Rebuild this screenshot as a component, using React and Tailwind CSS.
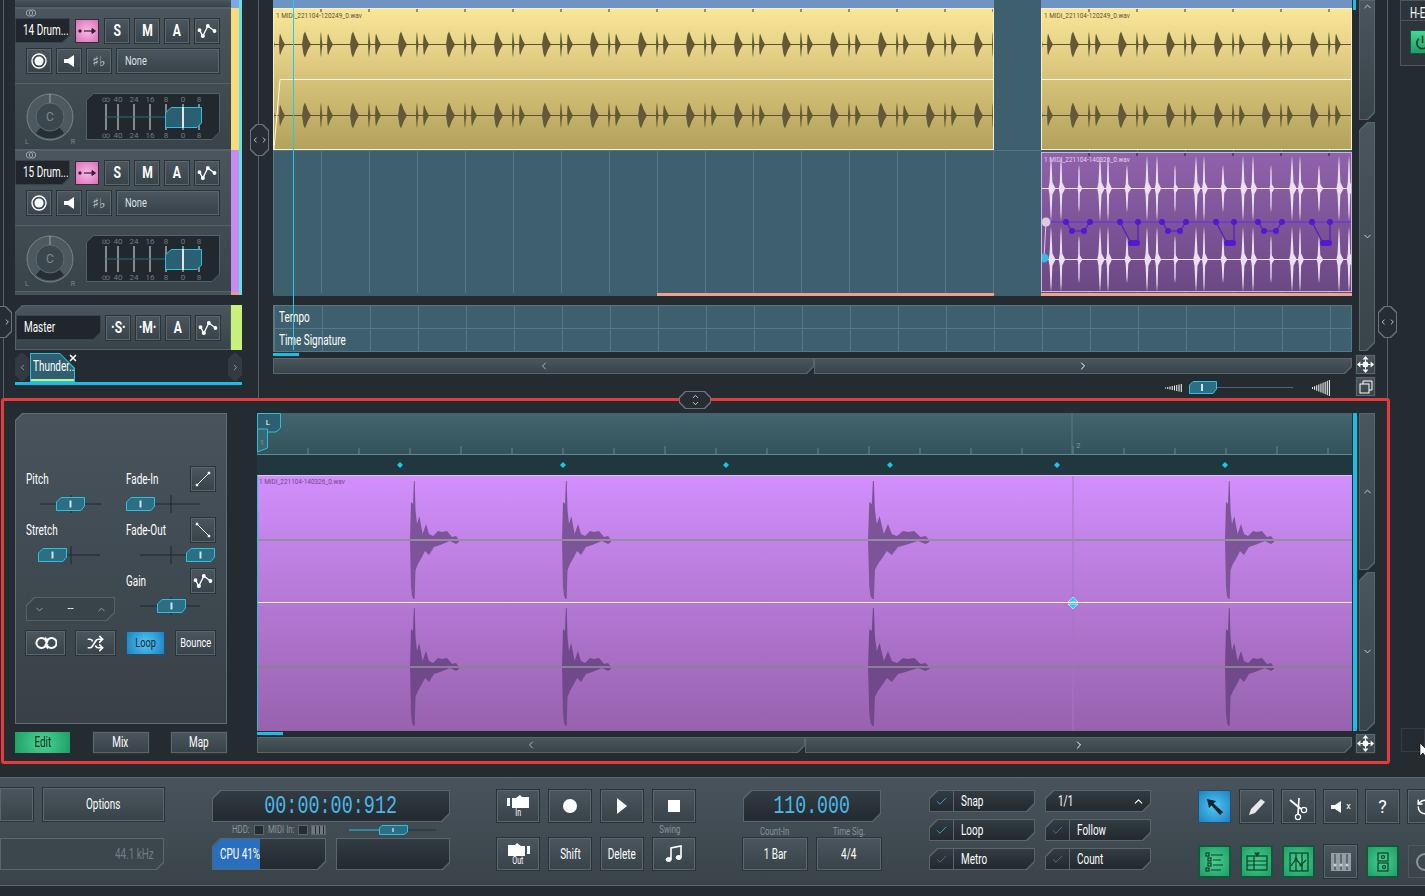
import React from "react";
import { Shuffle, ChevronLeft, ChevronRight, ChevronUp, ChevronDown, RotateCcw, Power, Check, X } from "lucide-react";

const cutBR = "[clip-path:polygon(0_0,100%_0,100%_calc(100%-7px),calc(100%-7px)_100%,0_100%)]";
const cutTL = "[clip-path:polygon(7px_0,100%_0,100%_100%,0_100%,0_7px)]";
const cutTLBR = "[clip-path:polygon(8px_0,100%_0,100%_calc(100%-8px),calc(100%-8px)_100%,0_100%,0_8px)]";
const cutAll = "[clip-path:polygon(6px_0,calc(100%-6px)_0,100%_6px,100%_calc(100%-6px),calc(100%-6px)_100%,6px_100%,0_calc(100%-6px),0_6px)]";
const raised = "bg-gradient-to-b from-[#4a555d] to-[#39434a]";
const well = "bg-gradient-to-b from-[#333c43] to-[#22292f]";

// condensed label, the app's own font is narrower than anything installed
function T({ children, className = "", left = false }) {
  return (
    <span className={`inline-block whitespace-nowrap scale-x-[0.71] ${left ? "origin-left" : "origin-center"} ${className}`}>
      {children}
    </span>
  );
}

function Btn({ children, className = "w-[24px] h-[24px]", tone = raised }) {
  return (
    <div className={`${className} ${tone} border border-[#5a656c] shadow-[0_0_0_1px_#2b3339] flex items-center justify-center text-white text-[13px]`}>
      {children}
    </div>
  );
}

function Cut({ clip = cutBR, className = "", line = "bg-[#5a656c]", fill = well, children, inner = "" }) {
  return (
    <div className={`${className} ${clip} ${line} p-px`}>
      <div className={`w-full h-full ${clip} ${fill} ${inner}`}>{children}</div>
    </div>
  );
}

function Curve({ size = 20 }) {
  return (
    <svg width={size} height={size} viewBox="0 0 24 24" fill="white" stroke="white" strokeWidth="1.6">
      <path d="M3 11 L7 18 L13 6 L21 12" fill="none" />
      <circle cx="3" cy="11" r="1.5" /><circle cx="7" cy="18" r="1.7" /><circle cx="13" cy="6" r="1.5" /><circle cx="21" cy="12" r="1.5" />
    </svg>
  );
}

function MoveIcon() {
  return (
    <svg width="17" height="17" viewBox="0 0 20 20" fill="white">
      <path d="M10 0 L13.5 4 H6.5 Z M10 20 L13.5 16 H6.5 Z M0 10 L4 6.5 V13.5 Z M20 10 L16 6.5 V13.5 Z" />
      <circle cx="10" cy="10" r="3.4" />
      <path d="M10 4 V16 M4 10 H16" stroke="white" strokeWidth="1.2" />
    </svg>
  );
}

function Handle({ className = "" }) {
  return (
    <Cut clip={cutAll} className={`absolute w-[19px] h-[32px] ${className}`} line="bg-[#69747b]" fill="bg-[#262d33]" inner="flex items-center justify-center">
      <ChevronLeft size={10} color="white" strokeWidth={2} />
      <ChevronRight size={10} color="white" strokeWidth={2} />
    </Cut>
  );
}

function Fader({ w = 89, x = 0, from = 0, to = 89 }) {
  return (
    <svg width={w} height="18" className="block">
      <line x1={from} x2={to} y1="9" y2="9" stroke="#20272c" />
      <line x1="45" x2="45" y1="0" y2="18" stroke="#20272c" />
      <path d={`M${x + 5} 2.5 H${x + 28.5} V11 L${x + 25} 15.5 H${x + 0.5} V7 Z`} fill="#2b6f84" stroke="#2fc0df" />
      <line x1={x + 14.5} x2={x + 14.5} y1="5.5" y2="12.5" stroke="#cfe4ea" strokeWidth="2" />
    </svg>
  );
}

function Meter() {
  const labels = [["∞", 20], ["40", 32], ["24", 48], ["16", 64], ["8", 80], ["0", 97], ["8", 113]];
  return (
    <svg width="134" height="47" className="block">
      <path d="M7.5 .5 H133.5 V39 L126 46.5 H.5 V7 Z" fill="#22292e" stroke="#555f66" />
      {labels.map(([t, x], i) => (
        <g key={i}>
          <text x={x} y="9" fontSize="8" fill="#6f797f" textAnchor="middle" fontFamily="Roboto">{t}</text>
          <text x={x} y="45" fontSize="8" fill="#6f797f" textAnchor="middle" fontFamily="Roboto">{t}</text>
          <line x1={x} x2={x} y1="11" y2="37" stroke="#e4e8ea" />
        </g>
      ))}
      <line x1="20" x2="80" y1="24" y2="24" stroke="#2f6d7a" />
      <path d="M85 14.5 H115.5 V30 L111 34.5 H79.5 V20 Z" fill="#2b5f72" stroke="#2fc0df" />
      <line x1="97" x2="97" y1="14" y2="35" stroke="#dfe7ea" strokeWidth="2" />
    </svg>
  );
}

function Knob() {
  return (
    <svg width="50" height="50" className="block">
      <circle cx="25" cy="25" r="23" fill="#4d585f" stroke="#7a848a" strokeWidth="1" />
      <path d="M11 41 A21 21 0 0 0 39 41 L33 34 A13 13 0 0 1 17 34 Z" fill="#262d33" />
      <circle cx="25" cy="25" r="14" fill="#3c464d" stroke="#5f6a71" />
      <line x1="25" x2="25" y1="2" y2="11" stroke="#9aa3a8" />
      <text x="25" y="29" fontSize="12" fill="#7d878d" textAnchor="middle" fontFamily="Roboto">C</text>
    </svg>
  );
}

function Track({ name, color }) {
  return (
    <div className="flex h-[142px]">
      <div className={`w-[216px] border-y border-[#566067] ${raised} flex flex-col`}>
        <div className="h-[9px] pl-[10px]">
          <svg width="12" height="8" viewBox="0 0 12 8" fill="none" stroke="#98a2a8"><circle cx="4.5" cy="4" r="3.2" /><circle cx="7.5" cy="4" r="3.2" /></svg>
        </div>
        <div className="flex h-[25px] items-center">
          <Cut className="w-[55px] h-[25px]" line="bg-[#39434a]" fill="bg-[#20262b]" inner="flex items-center pl-[7px]">
            <T left className="text-[14px] text-white">{name}</T>
          </Cut>
          <div className="ml-[5px] w-[24px] h-[24px] border border-[#3a2a36] bg-[radial-gradient(circle,#f8b8e4,#d970ba)] flex items-center justify-center">
            <svg width="18" height="8" viewBox="0 0 18 8" fill="#35202e" stroke="#35202e"><circle cx="2" cy="4" r="1.2" /><path d="M6 4 H16" strokeWidth="1.2" /><path d="M14 1.5 L17.5 4 L14 6.5 Z" /></svg>
          </div>
          <div className="flex ml-[6px] gap-[6px]">
            <Btn><T className="font-bold text-[17px]">S</T></Btn>
            <Btn><T className="font-bold text-[17px]">M</T></Btn>
            <Btn><T className="font-bold text-[17px]">A</T></Btn>
            <Btn><Curve /></Btn>
          </div>
        </div>
        <div className="flex h-[24px] mt-[6px] ml-[12px] gap-[6px]">
          <Btn>
            <svg width="18" height="18"><circle cx="9" cy="9" r="7" fill="none" stroke="white" strokeWidth="1.4" /><circle cx="9" cy="9" r="4.5" fill="white" /></svg>
          </Btn>
          <Btn>
            <svg width="14" height="14" viewBox="0 0 14 14" fill="white"><path d="M2 5 H6 L12 1 V13 L6 9 H2 Z" /></svg>
          </Btn>
          <Btn><span className="text-[14px] text-[#c0c8cc] font-['DejaVu_Sans']">♯♭</span></Btn>
          <Btn className="w-[102px] h-[24px]"><div className="w-full pl-[7px]"><T left className="text-[13px] text-[#dfe4e6]">None</T></div></Btn>
        </div>
        <div className="mt-[10px] flex-1 border-t border-[#566067] flex items-center">
          <div className="relative ml-[10px] w-[50px]">
            <Knob />
            <span className="absolute left-[0px] bottom-[-6px] text-[7px] text-[#7d878d]">L</span>
            <span className="absolute right-[0px] bottom-[-6px] text-[7px] text-[#7d878d]">R</span>
          </div>
          <div className="ml-[11px]"><Meter /></div>
        </div>
      </div>
      <div className={`w-[8px] ${color}`} />
      <div className="w-[3px] bg-[#62e0e6]" />
    </div>
  );
}

function yellowPath(width, c, a) {
  let d = "";
  for (let x = 0; x < width + 48; x += 48) {
    const parts = [[x - 1, 1, 1.5, a], [x + 6, 1, 5, a * 0.85], [x + 31, 3, 6, a]];
    parts.forEach(([p, l, r, h]) => {
      d += `M${p - l} ${c} L${p - l / 2} ${c - h * 0.75} L${p} ${c - h} L${p + r / 2} ${c - h * 0.4} L${p + r} ${c} L${p + r / 2} ${c + h * 0.4} L${p} ${c + h} L${p - l / 2} ${c + h * 0.75} Z`;
    });
  }
  return d;
}

function ClipTicks({ width, color }) {
  const xs = Array.from({ length: Math.ceil(width / 48) }, (_, i) => i * 48 + 47);
  return xs.map((x) => <line key={x} x1={x} x2={x} y1="0" y2="3" stroke={color} />);
}

function YellowClip({ width, fade }) {
  return (
    <div className="relative h-[142px] bg-gradient-to-b from-[#fbe698] to-[#b3a25c] border border-[#f6f0d0]" style={{ width }}>
      <svg width={width - 2} height="140" className="block">
        <line x1="0" x2={width} y1="35.5" y2="35.5" stroke="#5e5338" />
        <line x1="0" x2={width} y1="106.5" y2="106.5" stroke="#5e5338" />
        <path d={yellowPath(width, 35.5, 13)} fill="#635838" />
        <path d={yellowPath(width, 106.5, 13)} fill="#635838" />
        <ClipTicks width={width} color="#3a3322" />
        <path d={fade ? `M0 140 L6 70.5 H${width}` : `M0 70.5 H${width}`} fill="none" stroke="#fffbe6" />
      </svg>
      <span className="absolute left-[2px] top-[1px] text-[8px] text-[#5e5338] whitespace-nowrap scale-x-[0.8] origin-left">1 MIDI_221104-120249_0.wav</span>
    </div>
  );
}

function spikes(c) {
  const off = [[9, 33, 2.6], [19, 33, 2.2], [37, 24, 1.5], [58, 33, 2.8], [66, 33, 2], [85, 24, 2.4]];
  let d = "";
  for (let k = 0; k < 4; k++) {
    off.forEach(([o, a, w]) => {
      const x = o + k * 96;
      const m = a * 0.18;
      const n = w * 0.55;
      const t = a * 0.75;
      d += `M${x - w} ${c} L${x - n} ${c - m} L${x - 0.6} ${c - t} L${x} ${c - a} L${x + 0.6} ${c - t} L${x + n} ${c - m} L${x + w + 2} ${c} L${x + n} ${c + m} L${x + 0.6} ${c + t} L${x} ${c + a} L${x - 0.6} ${c + t} L${x - n} ${c + m} Z`;
    });
  }
  return d;
}

function PurpleClip() {
  const nodes = [];
  const lines = [];
  for (let k = 0; k < 3; k++) {
    const o = k * 96;
    [[24, 69], [30, 78], [42, 78], [48, 69]].forEach((p) => nodes.push([p[0] + o, p[1]]));
    lines.push(`M${24 + o} 69 L${30 + o} 78 H${42 + o} L${48 + o} 69`);
    [[78, 69], [89, 90], [92, 90], [95, 90], [96, 69]].forEach((p) => nodes.push([p[0] + o, p[1]]));
    lines.push(`M${78 + o} 69 L${89 + o} 90 H${96 + o} V69`);
  }
  return (
    <div className="relative w-[311px] h-[140px] mt-[2px] bg-gradient-to-b from-[#9062aa] to-[#6c4885] border border-[#cdb6dd]">
      <svg width="309" height="138" className="block overflow-hidden">
        <line x1="0" x2="309" y1="35.5" y2="35.5" stroke="#efe6f4" strokeWidth="1.2" />
        <line x1="0" x2="309" y1="106.5" y2="106.5" stroke="#efe6f4" strokeWidth="1.2" />
        <path d={spikes(35.5)} fill="#ebdff0" />
        <path d={spikes(106.5)} fill="#ebdff0" />
        <ClipTicks width={311} color="#2d1c3a" />
        <line x1="0" x2="309" y1="69" y2="69" stroke="#6a3ad8" strokeWidth="1.4" />
        {lines.map((d, i) => <path key={i} d={d} fill="none" stroke="#5318d0" strokeWidth="1.2" />)}
        {nodes.map(([x, y], i) => <circle key={i} cx={x} cy={y} r="3" fill="#5318d0" />)}
        <line x1="4" x2="2" y1="69" y2="105" stroke="#d9cce2" />
        <circle cx="4" cy="69" r="4.5" fill="#d9cce2" />
        <circle cx="2" cy="105" r="4.5" fill="#37bce6" />
      </svg>
      <span className="absolute left-[2px] top-[1px] text-[8px] text-[#e4d4ee] whitespace-nowrap scale-x-[0.8] origin-left">1 MIDI_221104-140326_0.wav</span>
    </div>
  );
}

function Scroll({ className = "", parts }) {
  return (
    <div className={`flex ${className}`}>
      <Cut clip={cutBR} className="h-full" line="bg-[#59646b]" fill={raised}>
        <div className="flex items-center justify-center h-full" style={{ width: parts[0] }}><ChevronLeft size={12} color="#aab3b8" /></div>
      </Cut>
      <Cut clip={cutBR} className="h-full" line="bg-[#59646b]" fill={raised}>
        <div className="flex items-center justify-center h-full" style={{ width: parts[1] }}><ChevronRight size={12} color="white" /></div>
      </Cut>
    </div>
  );
}

function VScroll({ className = "", up, topArrow = false }) {
  return (
    <div className={`flex flex-col gap-[2px] ${className}`}>
      <Cut clip={cutBR} className="w-[16px]" line="bg-[#59646b]" fill={raised}>
        <div className={`w-full flex justify-center ${topArrow ? "items-start" : "items-center"}`} style={{ height: up }}>
          <ChevronUp size={11} color="#cfd6da" />
        </div>
      </Cut>
      <Cut clip={cutTLBR} className="w-[16px] flex-1" line="bg-[#59646b]" fill={raised} inner="flex items-center justify-center">
        <ChevronDown size={11} color="#cfd6da" />
      </Cut>
    </div>
  );
}

function Bars({ n, max, w }) {
  const step = w / n;
  return (
    <svg width={w} height={max} className="block">
      {Array.from({ length: n }).map((_, i) => {
        const h = Math.max(1, (max * (i + 1)) / n);
        return <line key={i} x1={i * step + 0.5} x2={i * step + 0.5} y1={(max - h) / 2} y2={(max + h) / 2} stroke="white" />;
      })}
    </svg>
  );
}

function TopSection() {
  return (
    <div className="relative flex h-[398px]">
      <div className="ml-[3px] w-[12px] shrink-0 border-l border-[#566067]" />
      {/* track list */}
      <div className="w-[228px] shrink-0 flex flex-col">
        <div className="flex h-[8px]">
          <div className={`w-[216px] ${raised} border-b border-[#566067]`} />
          <div className="w-[8px] bg-[#7ea8e0]" />
          <div className="w-[3px] bg-[#62e0e6]" />
        </div>
        <Track name="14 Drum..." color="bg-[#f8dc7c]" />
        <Track name="15 Drum..." color="bg-[#c88cf0]" />
        <div className="flex h-[3px]">
          <div className="w-[216px] bg-[#465159]" />
          <div className="w-[8px] bg-[#e89a8c]" />
          <div className="w-[3px] bg-[#62e0e6]" />
        </div>
        <div className="flex h-[45px] mt-[10px]">
          <Cut clip={cutTL} className="w-[216px] h-full" line="bg-[#566067]" fill={raised} inner="flex items-center">
            <Cut className="w-[85px] h-[25px]" line="bg-[#39434a]" fill="bg-[#20262b]" inner="flex items-center pl-[7px]">
              <T left className="text-[14px] text-white">Master</T>
            </Cut>
            <div className="flex ml-[5px] gap-[6px]">
              <Btn><T className="font-bold text-[17px]">·S·</T></Btn>
              <Btn><T className="font-bold text-[17px]">·M·</T></Btn>
              <Btn><T className="font-bold text-[17px]">A</T></Btn>
              <Btn><Curve /></Btn>
            </div>
          </Cut>
          <div className="w-[11px] bg-[#c8f07c]" />
        </div>
        <div className="flex h-[32px] mt-[3px] w-[227px] border-b-[3px] border-[#17bfe6]">
          <Cut clip={cutAll} className="w-[14px] h-[28px]" line="bg-[#333c43]" fill="bg-[#323b42]" inner="flex items-center justify-center">
            <ChevronLeft size={9} color="#aab3b8" />
          </Cut>
          <div className="relative ml-[1px] w-[45px] h-[29px] [clip-path:polygon(0_0,30px_0,100%_15px,100%_100%,0_100%)] bg-[#29c0e0] p-px">
            <div className="w-full h-full [clip-path:polygon(0_0,29px_0,100%_15px,100%_100%,0_100%)] bg-[#2f5f70] border-b-2 border-[#c8f07c] flex items-center pl-[2px]">
              <T left className="text-[14px] text-white">Thunder...</T>
            </div>
          </div>
          <div className="flex-1" />
          <Cut clip={cutAll} className="w-[14px] h-[28px]" line="bg-[#333c43]" fill="bg-[#323b42]" inner="flex items-center justify-center">
            <ChevronRight size={9} color="#aab3b8" />
          </Cut>
        </div>
      </div>
      <div className="w-[16px] shrink-0 border-r border-[#566067]" />
      <div className="w-[14px] shrink-0" />
      {/* arrangement */}
      <div className="w-[1079px] shrink-0 flex flex-col">
        <div className="flex h-[8px] bg-[#3e5f6d]">
          <div className="w-[721px] bg-[#6f94c4]" />
          <div className="w-[47px]" />
          <div className="w-[311px] bg-[#6f94c4]" />
        </div>
        <div className="h-[285px] bg-[#3e5f6d] bg-[repeating-linear-gradient(90deg,#587a88_0,#587a88_1px,transparent_1px,transparent_48px)]">
          <div className="flex h-[142px]">
            <YellowClip width={721} fade />
            <div className="w-[47px]" />
            <YellowClip width={311} />
          </div>
          <div className="flex h-[143px]">
            <div className="w-[768px] border-t border-[#55747f]" />
            <PurpleClip />
          </div>
        </div>
        <div className="flex h-[3px] bg-[#3e5f6d]">
          <div className="w-[384px]" />
          <div className="w-[337px] bg-[#f0a090]" />
          <div className="w-[47px]" />
          <div className="w-[311px] bg-[#f0a090]" />
        </div>
        <div className="mt-[9px] h-[47px] border border-[#5a7683] bg-[#3e5f6d] bg-[repeating-linear-gradient(90deg,#587a88_0,#587a88_1px,transparent_1px,transparent_48px)] flex flex-col">
          <div className="h-[23px] border-b border-[#587a88] flex items-center pl-[5px]"><T left className="text-[14px] text-white">Tempo</T></div>
          <div className="flex-1 flex items-center pl-[5px]"><T left className="text-[14px] text-white">Time Signature</T></div>
        </div>
        <div className="mt-[1px] w-[26px] h-[3px] bg-[#17bfe6]" />
        <Scroll className="mt-[2px] h-[16px]" parts={[539, 536]} />
        <div className="mt-[6px] flex items-center justify-end pr-[21px] h-[15px]">
          <Bars n={8} max={8} w={18} />
          <div className="ml-[6px]"><svg width="104" height="15" className="block"><line x1="0" x2="104" y1="7.5" y2="7.5" stroke="#59646b" /><path d="M4 1.5 H27.5 V9 L24 13.5 H.5 V5 Z" fill="#2b6f84" stroke="#2fc0df" /><line x1="13" x2="13" y1="4" y2="11" stroke="#cfe4ea" strokeWidth="2" /></svg></div>
          <div className="ml-[19px]"><Bars n={9} max={16} w={19} /></div>
        </div>
      </div>
      <div className="w-[2px] shrink-0" />
      {/* right scroll */}
      <div className="w-[5px] shrink-0 flex flex-col"><div className="h-[10px] w-[3px] -ml-[1px] bg-[#17bfe6]" /></div>
      <div className="w-[20px] shrink-0 flex flex-col">
        <VScroll className="h-[351px]" up={118} topArrow />
        <div className="mt-[4px] -ml-[3px]"><Btn className="w-[19px] h-[19px]"><MoveIcon /></Btn></div>
        <div className="mt-[3px] -ml-[3px]">
          <Btn className="w-[19px] h-[19px]">
            <svg width="14" height="14" fill="none" stroke="white"><rect x="1" y="4" width="9" height="9" /><path d="M4 4 V1 H13 V10 H10" /></svg>
          </Btn>
        </div>
      </div>
      <div className="w-[9px] shrink-0 border-r border-[#566067]" />
      <div className="ml-[12px] flex-1 min-w-0 overflow-hidden">
        <div className="h-[66px] w-[60px] border border-[#4d575e] bg-[#2d353b]">
          <div className="h-[20px] border-b border-[#4d575e] pl-[9px]"><T left className="text-[14px] text-white">H-E</T></div>
          <div className="mt-[9px] ml-[9px] w-[24px] h-[24px] bg-gradient-to-b from-[#46d892] to-[#1f9e66] border border-[#17563d] flex items-center justify-center">
            <Power size={15} color="#123d2b" strokeWidth={2.4} />
          </div>
        </div>
      </div>
      <Handle className="left-[250px] top-[124px]" />
      <Handle className="left-[-7px] top-[306px]" />
      <Handle className="left-[1378px] top-[306px]" />
      <div className="absolute left-[293px] top-0 w-px h-[350px] bg-[#19cdf0]" />
      <div className="absolute left-[68px] top-[353px] text-white"><X size={10} strokeWidth={4} /></div>
    </div>
  );
}

const upper = [[0, 0], [1, 38], [3, 36], [3.9, 59], [4.7, 59], [5.5, 30], [7, 16], [9.3, 24], [12.6, 6], [16, 16], [19, 6], [23, 4], [28, 9], [32, 8], [37, 9], [42, 3], [46, 4], [49, 0]];
const lower = [[49, 2], [46, 4], [40, 1], [30, 5], [24, 7], [19, 15], [15, 11], [12, 17], [8, 24], [5.5, 30], [4.7, 59], [3.5, 59], [2, 56], [1, 47], [0, 0]];

function hitPath(x0, c, stretch) {
  const up = upper.map(([x, a]) => `${(x0 + x * stretch).toFixed(1)} ${c - a}`).join(" L");
  const dn = lower.map(([x, a]) => `${(x0 + x * stretch).toFixed(1)} ${c + a}`).join(" L");
  return `M${up} L${dn} Z`;
}

function Timeline() {
  const hits = [[152, 1], [304, 1], [610, 1.25], [967, 1]];
  const ticks = Array.from({ length: 22 }, (_, i) => 0 + 51 * i);
  const marks = [143, 306, 469, 633, 800, 968];
  return (
    <div className="w-[1095px] flex flex-col">
      <div className="relative h-[42px] bg-gradient-to-b from-[#44656f] to-[#32525c] border-b border-[#6b8690]">
        <svg width="1095" height="41" className="block">
          {ticks.map((x, i) => <line key={i} x1={x} x2={x} y1={i % 4 === 0 ? 33 : 35} y2="41" stroke="#6b8690" />)}
          <line x1="815" x2="815" y1="0" y2="41" stroke="#5d7a85" />
          <text x="819" y="35" fontSize="8" fill="#7b949e" fontFamily="Roboto">2</text>
          <path d="M.5 .5 H23.5 V15 L19 19 H.5 Z" fill="#2d5f70" stroke="#29c0e0" />
          <text x="11" y="12" fontSize="8" fill="white" textAnchor="middle" fontFamily="Roboto">L</text>
          <path d="M.5 16 H10.5 V35 L.5 39 Z" fill="#3b6674" stroke="#29c0e0" />
          <text x="5" y="32" fontSize="8" fill="#7b949e" textAnchor="middle" fontFamily="Roboto">1</text>
        </svg>
      </div>
      <div className="h-[20px] bg-[#213740]">
        <svg width="1095" height="20" className="block">
          {marks.map((x) => <path key={x} d={`M${x} 7 L${x + 3} 10 L${x} 13 L${x - 3} 10 Z`} fill="#17c8ee" />)}
        </svg>
      </div>
      <div className="relative h-[256px] bg-gradient-to-b from-[#d18ffc] to-[#9862ae] border-l border-[#29c0e0] border-t border-t-[#e0c4f4]">
        <svg width="1094" height="255" className="block">
          <line x1="815" x2="815" y1="0" y2="255" stroke="#a574c4" />
          {hits.map(([x, s]) => (
            <g key={x}>
              <path d={hitPath(x, 64, s)} fill="#7c5498" />
              <path d={hitPath(x, 191, s)} fill="#70498a" />
            </g>
          ))}
          <line x1="0" x2="1094" y1="64" y2="64" stroke="#968ba0" strokeWidth="2" />
          <line x1="0" x2="1094" y1="191" y2="191" stroke="#8b7f95" strokeWidth="2" />
          <line x1="0" x2="1094" y1="126.5" y2="126.5" stroke="#f6eefb" strokeWidth="1.2" />
          <path d="M815 121 L820 126 H810 Z M815 133 L820 128 H810 Z" fill="#29cdf0" stroke="#e6fbff" strokeWidth=".6" />
        </svg>
        <span className="absolute left-[1px] top-[0px] text-[8px] text-[#6f4a88] whitespace-nowrap scale-x-[0.8] origin-left">1 MIDI_221104-140326_0.wav</span>
      </div>
      <div className="mt-[1px] w-[26px] h-[3px] bg-[#17bfe6]" />
      <Scroll className="mt-[2px] h-[16px]" parts={[546, 545]} />
    </div>
  );
}

function EditPanel() {
  return (
    <div className="w-[212px] flex flex-col">
      <Cut clip={cutTL} className="h-[311px] w-full" line="bg-[#606b72]" fill="bg-gradient-to-b from-[#48535b] to-[#384148]" inner="pl-[10px] pt-[53px]">
        <div className="grid grid-cols-[89px_89px] gap-x-[11px] auto-rows-[51px]">
          <div>
            <div className="h-[24px] flex items-center"><T left className="text-[14px] text-white">Pitch</T></div>
            <div className="mt-[4px]"><Fader x={30} from={14} to={75} /></div>
          </div>
          <div>
            <div className="h-[24px] flex items-center justify-between">
              <T left className="text-[14px] text-white">Fade-In</T>
              <Btn><svg width="18" height="18" fill="white" stroke="white"><path d="M3 15 L15 3" /><circle cx="3" cy="15" r="1" /><circle cx="15" cy="3" r="1" /></svg></Btn>
            </div>
            <div className="mt-[4px]"><Fader x={0} from={0} to={74} /></div>
          </div>
          <div>
            <div className="h-[24px] flex items-center"><T left className="text-[14px] text-white">Stretch</T></div>
            <div className="mt-[4px]"><Fader x={12} from={12} to={74} /></div>
          </div>
          <div>
            <div className="h-[24px] flex items-center justify-between">
              <T left className="text-[14px] text-white">Fade-Out</T>
              <Btn><svg width="18" height="18" fill="white" stroke="white"><path d="M3 3 L15 15" /><circle cx="3" cy="3" r="1" /><circle cx="15" cy="15" r="1" /></svg></Btn>
            </div>
            <div className="mt-[4px]"><Fader x={60} from={14} to={70} /></div>
          </div>
          <div className="pt-[28px]">
            <Cut clip={cutTLBR} className="w-[89px] h-[24px]" line="bg-[#566067]" fill="bg-[#39434a]" inner="flex items-center justify-between px-[7px] text-[#9aa3a8]">
              <ChevronDown size={11} />
              <span className="text-[11px] text-white">--</span>
              <ChevronUp size={11} />
            </Cut>
          </div>
          <div>
            <div className="h-[24px] flex items-center justify-between">
              <T left className="text-[14px] text-white">Gain</T>
              <Btn><Curve /></Btn>
            </div>
            <div className="mt-[4px]"><Fader x={31} from={14} to={74} /></div>
          </div>
        </div>
        <div className="flex gap-[11px] mt-[11px]">
          <Btn className="w-[39px] h-[24px]">
            <svg width="22" height="14" viewBox="0 0 22 14" fill="none" stroke="white" strokeWidth="2"><path d="M10 3.5 A5 5 0 1 0 10 10.5 L13 3.5 A5 5 0 1 1 13 10.5" /><path d="M10 1 L13 3.5 L10 6 Z M13 8 L10 10.5 L13 13 Z" fill="white" strokeWidth=".5" /></svg>
          </Btn>
          <Btn className="w-[39px] h-[24px]"><Shuffle size={17} strokeWidth={2.4} /></Btn>
          <div className="w-[39px] h-[24px] bg-[radial-gradient(circle,#52c8f4,#1d80c0)] border border-[#2a4d66] flex items-center justify-center"><T className="text-[13px] text-[#10242e]">Loop</T></div>
          <Btn className="w-[39px] h-[24px]"><T className="text-[13px]">Bounce</T></Btn>
        </div>
      </Cut>
      <div className="mt-[8px] flex justify-between">
        <div className="w-[55px] h-[21px] bg-[radial-gradient(circle,#49d496,#1f9e66)] flex items-center justify-center"><T className="text-[14px] text-[#0c2e20]">Edit</T></div>
        <Btn className="w-[56px] h-[21px]"><T className="text-[14px]">Mix</T></Btn>
        <Btn className="w-[56px] h-[21px]"><T className="text-[14px]">Map</T></Btn>
      </div>
    </div>
  );
}

function Editor() {
  return (
    <div className="flex h-[366px]">
      <div className="relative ml-[1px] w-[1389px] shrink-0 h-[366px] border-[3px] border-[#e53b3c] rounded-[3px] flex pl-[11px] pt-[12px]">
        <EditPanel />
        <div className="w-[30px]" />
        <Timeline />
        <div className="w-[1px]" />
        <div className="w-[4px] h-[318px] bg-[#17bfe6]" />
        <div className="ml-[2px] w-[16px] flex flex-col">
          <VScroll className="h-[318px]" up={155} />
          <div className="mt-[3px] -ml-[3px]"><Btn className="w-[19px] h-[19px]"><MoveIcon /></Btn></div>
        </div>
        <Cut clip={cutAll} className="absolute left-[675px] top-[-10px] w-[32px] h-[18px]" line="bg-[#69747b]" fill="bg-[#262d33]" inner="flex flex-col items-center justify-center">
          <ChevronUp size={9} color="white" className="-mb-[2px]" />
          <ChevronDown size={9} color="white" />
        </Cut>
      </div>
      <div className="ml-[11px] flex-1 min-w-0 pt-[330px]">
        <div className="w-full h-[24px] border border-[#333c43]" />
      </div>
    </div>
  );
}

function Chk({ on, label }) {
  return (
    <Cut clip={cutTLBR} className="w-[106px] h-[22px]" line="bg-[#59646b]" inner="flex items-center">
      <div className="w-[24px] h-full border-r border-[#59646b] flex items-center justify-center">
        <Check size={13} color={on ? "#29c6e6" : "#6b757b"} strokeWidth={1.5} />
      </div>
      <div className="pl-[7px]"><T left className="text-[14px] text-white">{label}</T></div>
    </Cut>
  );
}

function Clapper({ out }) {
  return (
    <svg width="23" height="14" viewBox="0 0 23 14" fill="white" className={out ? "-scale-x-100" : ""}>
      <rect x="0" y="4" width="3" height="8" />
      <path d="M5 4 L9 4 L13 1 L15 3 H22 V14 H5 Z" />
    </svg>
  );
}

function ScissorsIcon() {
  return (
    <svg width="31" height="31" viewBox="0 0 31 31" fill="none" stroke="white">
      <path d="M7 9 L18 18" strokeWidth="2" />
      <path d="M16 7 L15 23" strokeWidth="1.6" />
      <circle cx="21" cy="19" r="2.6" strokeWidth="1.2" />
      <circle cx="15" cy="26" r="2.6" strokeWidth="1.2" />
    </svg>
  );
}

function Transport() {
  const greens = "bg-[radial-gradient(circle,#45d08e,#1f9e66)] border-2 border-[#17563d]";
  const toolBox = "w-[33px] h-[33px]";
  return (
    <div className="mt-[13px] h-[109px] border-y border-[#5d686f] bg-gradient-to-b from-[#48535b] to-[#3a434a] flex overflow-hidden">
      <div className="w-[164px] shrink-0 pt-[10px]">
        <div className="flex gap-[10px] h-[33px]">
          <Btn className="w-[33px] h-[33px]"><span /></Btn>
          <Btn className="w-[121px] h-[33px]"><T className="text-[14px]">Options</T></Btn>
        </div>
        <Cut className="mt-[17px] w-[164px] h-[32px]" fill="bg-[#3c464d]" inner="flex items-center justify-end pr-[9px]">
          <T className="text-[14px] text-[#737d83] origin-right">44.1 kHz</T>
        </Cut>
      </div>
      <div className="ml-[48px] w-[238px] shrink-0 pt-[12px]">
        <Cut clip={cutTLBR} className="h-[32px]" inner="flex items-center justify-center">
          <span className="font-['Liberation_Mono'] text-[26px] text-[#4bb8e8] scale-x-[0.71] inline-block whitespace-nowrap">00:00:00:912</span>
        </Cut>
        <div className="h-[16px] flex items-center">
          <div className="ml-[20px] w-[110px] flex items-center text-[#8a949a]">
            <T left className="text-[11px] w-[22px]">HDD:</T>
            <div className="w-[10px] h-[10px] border border-[#5a656c] bg-[#252c32]" />
            <T left className="ml-[4px] text-[11px] w-[30px]">MIDI In:</T>
            <div className="w-[10px] h-[10px] border border-[#5a656c] bg-[#252c32]" />
            <div className="ml-[3px] w-[15px] h-[10px] border border-[#5a656c] bg-[repeating-linear-gradient(90deg,#6f797f_0,#6f797f_3px,#252c32_3px,#252c32_4px)]" />
          </div>
          <div className="ml-[7px]">
            <svg width="87" height="12" className="block"><line x1="0" x2="30" y1="6" y2="6" stroke="#2fc0df" /><line x1="30" x2="87" y1="6" y2="6" stroke="#2b3339" /><path d="M33 1.5 H58.5 V8 L55 10.5 H30.5 V4 Z" fill="#2b6f84" stroke="#2fc0df" /><line x1="44" x2="44" y1="4" y2="8" stroke="white" /></svg>
          </div>
        </div>
        <div className="flex gap-[10px]">
          <Cut clip={cutTLBR} className="w-[114px] h-[32px]" inner="relative">
            <div className="w-[47px] h-full bg-[#2a6ebe] flex items-center pl-[7px]">
              <T left className="text-[14px] text-white">CPU 41%</T>
            </div>
          </Cut>
          <Cut className="w-[114px] h-[32px]" />
        </div>
      </div>
      <div className="ml-[47px] shrink-0 pt-[12px]">
        <div className="flex gap-[10px]">
          <Btn className="w-[42px] h-[32px]">
            <div className="flex flex-col items-center"><Clapper /><T className="text-[10px] leading-[10px]">In</T></div>
          </Btn>
          <Btn className="w-[42px] h-[32px]"><div className="w-[14px] h-[14px] rounded-full bg-white" /></Btn>
          <Btn className="w-[42px] h-[32px]"><svg width="12" height="16" fill="white"><path d="M1 0 L11 8 L1 16 Z" /></svg></Btn>
          <Btn className="w-[42px] h-[32px]"><div className="w-[12px] h-[12px] bg-white" /></Btn>
        </div>
        <div className="h-[16px] flex justify-end pr-[10px] items-center"><T className="text-[11px] text-[#8a949a]">Swing</T></div>
        <div className="flex gap-[10px]">
          <Btn className="w-[42px] h-[32px]">
            <div className="flex flex-col items-center"><Clapper out /><T className="text-[10px] leading-[10px]">Out</T></div>
          </Btn>
          <Btn className="w-[42px] h-[32px]"><T className="text-[14px]">Shift</T></Btn>
          <Btn className="w-[42px] h-[32px]"><T className="text-[14px]">Delete</T></Btn>
          <Btn className="w-[42px] h-[32px]">
            <svg width="18" height="18" viewBox="0 0 18 18" fill="white" stroke="white"><path d="M6 14 V3 L16 1 V12" fill="none" strokeWidth="1.6" /><ellipse cx="3.7" cy="14.5" rx="2.6" ry="2" /><ellipse cx="13.7" cy="12.5" rx="2.6" ry="2" /></svg>
          </Btn>
        </div>
      </div>
      <div className="ml-[48px] w-[138px] shrink-0 pt-[12px]">
        <Cut clip={cutTLBR} className="h-[32px]" inner="flex items-center justify-center">
          <span className="font-['Liberation_Mono'] text-[26px] text-[#4bb8e8] scale-x-[0.7] inline-block whitespace-nowrap">110.000</span>
        </Cut>
        <div className="h-[16px] flex items-center text-[#8a949a]">
          <div className="w-[64px] text-center"><T className="text-[11px]">Count-In</T></div>
          <div className="ml-[10px] w-[64px] text-center"><T className="text-[11px]">Time Sig.</T></div>
        </div>
        <div className="flex gap-[10px]">
          <Btn className="w-[64px] h-[32px]"><T className="text-[14px]">1 Bar</T></Btn>
          <Btn className="w-[64px] h-[32px]"><T className="text-[14px]">4/4</T></Btn>
        </div>
      </div>
      <div className="ml-[48px] w-[106px] shrink-0 pt-[12px] flex flex-col gap-[7px]">
        <Chk on label="Snap" />
        <Chk on label="Loop" />
        <Chk label="Metro" />
      </div>
      <div className="ml-[10px] w-[106px] shrink-0 pt-[12px] flex flex-col gap-[7px]">
        <Cut clip={cutTLBR} className="w-[106px] h-[22px]" line="bg-[#59646b]" inner="flex items-center justify-between pl-[12px] pr-[5px]">
          <T left className="text-[14px] text-white">1/1</T>
          <ChevronUp size={13} color="white" />
        </Cut>
        <Chk label="Follow" />
        <Chk label="Count" />
      </div>
      <div className="ml-[47px] shrink-0 pt-[12px] grid grid-cols-[33px_33px_33px_33px_33px_33px] gap-x-[9px] gap-y-[15px]">
        <div className={`${toolBox} bg-[radial-gradient(circle,#52c8f4,#1d80c0)] border border-[#2a4d66] flex items-center justify-center`}>
          <svg width="18" height="18" viewBox="0 0 18 18" fill="#10242e"><path d="M1 1 L10 3 L7.5 5.5 L17 14 L14 17 L5.5 7.5 L3 10 Z" /></svg>
        </div>
        <Btn className={toolBox}>
          <svg width="18" height="18" viewBox="0 0 18 18" fill="#e6e9eb"><path d="M1 17 L3 11 L13 1 L17 4 L7 15 Z" /></svg>
        </Btn>
        <Btn className={toolBox}><ScissorsIcon /></Btn>
        <Btn className={toolBox}>
          <div className="flex items-center gap-[2px]">
            <svg width="14" height="14" viewBox="0 0 14 14" fill="white"><path d="M1 5 H5 L11 1 V13 L5 9 H1 Z" /></svg>
            <span className="text-[9px]">x</span>
          </div>
        </Btn>
        <Btn className={toolBox}><span className="text-[18px]">?</span></Btn>
        <Btn className={toolBox}><RotateCcw size={18} /></Btn>
        <div className={`${toolBox} ${greens} flex items-center justify-center`}>
          <svg width="20" height="20" fill="none" stroke="#123d2b" strokeWidth="1.2"><rect x="1" y="1" width="3" height="3" /><rect x="3" y="6" width="3" height="3" /><rect x="3" y="11" width="3" height="3" /><rect x="1" y="16" width="3" height="3" /><path d="M6 3 H18 M8 8 H16 M8 13 H18 M6 18 H16" /></svg>
        </div>
        <div className={`${toolBox} ${greens} flex items-center justify-center`}>
          <svg width="22" height="20" fill="none" stroke="#123d2b" strokeWidth="1.2"><path d="M9 1 H13 L11 4 Z" fill="#123d2b" /><rect x="1" y="4" width="20" height="14" /><path d="M1 9 H21 M1 13 H21 M8 4 V18" /></svg>
        </div>
        <div className={`${toolBox} ${greens} flex items-center justify-center`}>
          <svg width="20" height="20" fill="#123d2b" stroke="#123d2b" strokeWidth="1.2"><rect x="1" y="1" width="18" height="18" fill="none" /><path d="M7 1 V19 M13 1 V19" /><path d="M2 14 L7 7 L12 13 L17 8" fill="none" /><circle cx="7" cy="7" r="1" /><circle cx="12" cy="13" r="1" /></svg>
        </div>
        <Btn className={toolBox}>
          <svg width="22" height="20" fill="#949da2"><rect x="1" y="1" width="20" height="18" /><path d="M5 2 V18 M11 2 V18 M17 2 V18" stroke="#3f494f" strokeWidth="1.2" /><circle cx="5" cy="13" r="1.6" fill="#c6ccd0" /><circle cx="11" cy="13" r="1.6" fill="#c6ccd0" /><circle cx="17" cy="13" r="1.6" fill="#c6ccd0" /></svg>
        </Btn>
        <div className={`${toolBox} ${greens} flex items-center justify-center`}>
          <svg width="12" height="20" fill="none" stroke="#123d2b" strokeWidth="1.2"><rect x="1" y="1" width="10" height="8" /><rect x="1" y="11" width="10" height="8" /><circle cx="6" cy="5" r="1.5" /><circle cx="7" cy="15" r="1.5" /></svg>
        </div>
        <div className={`${toolBox} border border-[#4d575e] flex items-center justify-center`}>
          <div className="w-[18px] h-[18px] rounded-full border-2 border-[#8a949a]" />
        </div>
      </div>
    </div>
  );
}

export default function App() {
  return (
    <div className="relative w-[1425px] h-[896px] overflow-hidden bg-[#242b31] font-['Roboto',sans-serif]">
      <TopSection />
      <Editor />
      <Transport />
      <svg width="10" height="16" viewBox="0 0 10 16" fill="white" stroke="black" strokeWidth=".6" className="absolute left-[1419px] top-[742px]">
        <path d="M1 1 V14 L4 11 L7 15 L8.5 14 L6 10 H10 Z" />
      </svg>
    </div>
  );
}
